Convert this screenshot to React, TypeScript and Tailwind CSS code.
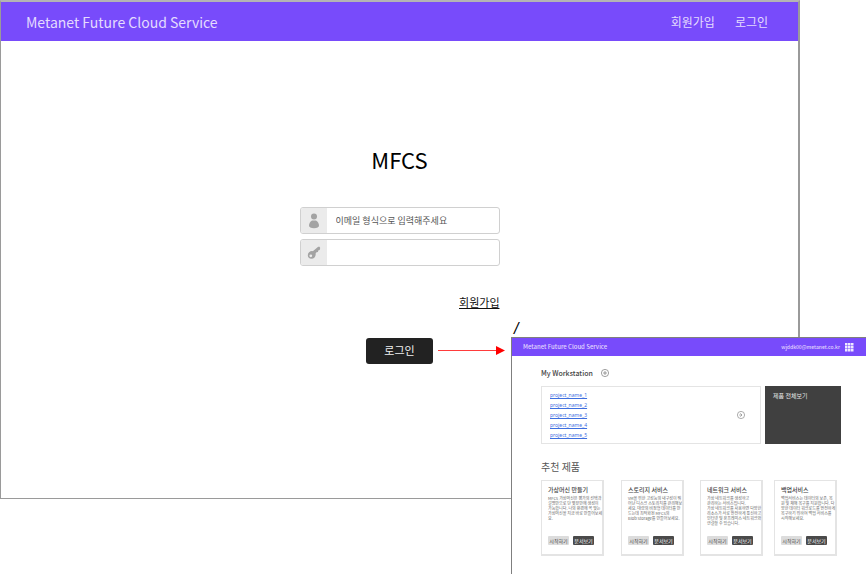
import React from "react";

const projects = [
  "project_name_1",
  "project_name_2",
  "project_name_3",
  "project_name_4",
  "project_name_5",
];

const products = [
  {
    title: "가상머신 만들기",
    lines: [
      "MFCS 가상머신은 평가의 선택과",
      "설명만으로 단 몇분만에 생성이",
      "가능합니다. 나의 환경에 꼭 맞는",
      "가상머신을 지금 바로 만들어보세",
      "요.",
    ],
  },
  {
    title: "스토리지 서비스",
    lines: [
      "VM을 위한 고성능의 내구성이 뛰",
      "어난 디스크 스토리지를 관리해보",
      "세요. 대량의 비정형 데이터를 만",
      "드는데 최적화된 MFCS의",
      "Blob Storage를 만들어보세요.",
    ],
  },
  {
    title: "네트워크 서비스",
    lines: [
      "가상 네트워크를 생성하고",
      "관리하는 서비스입니다.",
      "가상 네트워크를 사용하면 다양한",
      "리소스가 서로 안전하게 통신하고",
      "인터넷 및 온프레미스 네트워크와",
      "연결할 수 있습니다.",
    ],
  },
  {
    title: "백업서비스",
    lines: [
      "백업서비스는 데이터의 보존, 복",
      "원 및 재해 복구를 지원합니다. 다",
      "양한 데이터 워크로드를 안전하게",
      "복구하기 위하여 백업 서비스를",
      "시작해보세요.",
    ],
  },
];

function UserIcon() {
  return (
    <svg viewBox="0 0 12 16" className="h-4 w-3" fill="#a3a3a3" aria-hidden="true">
      <circle cx="6" cy="3.5" r="3" />
      <path d="M4 7.4h4c2 1 3 3.2 3 5.2 0 1.8-2 2.6-5 2.6s-5-.8-5-2.6c0-2 1-4.200 3-5.200z" />
    </svg>
  );
}

function KeyIcon() {
  return (
    <svg viewBox="0 0 14 14" className="size-3.5" aria-hidden="true">
      <path
        fill="#a3a3a3"
        fillRule="evenodd"
        d="M12.600 .8l.6 1.200-.5 2-1.500.5-.2 1.400-1.500.4-.9 1.300c.5 2.300-1.200 5.200-4.200 5.200C2.200 12.800.8 11.200.8 9.200c0-2.600 2.600-4.500 5-4l5.400-4.400zM3.800 8.400a1.400 1.400 0 1 0 0 2.800 1.400 1.400 0 0 0 0-2.800z"
      />
    </svg>
  );
}

function LoginWindow() {
  return (
    <section className="mr-[66px] h-[499px] border border-t-2 border-r-2 border-[#9a9a9a] border-t-[#b4b4b4] bg-white">
      <header className="flex h-[39px] items-center justify-between bg-[#784bfb] pl-[25px] pr-[30px]">
        <span className="text-[14px] leading-5 text-[#e4dbfe]">Metanet Future Cloud Service</span>
        <nav className="flex gap-5 text-[12px] leading-5 text-[#e4dbfe]">
          <a href="#signup">회원가입</a>
          <a href="#login">로그인</a>
        </nav>
      </header>
      <form className="mx-auto flex w-[200px] flex-col pt-[102px]" onSubmit={(e) => e.preventDefault()}>
        <h1 className="text-center text-[22px] leading-8 text-black">MFCS</h1>
        <div className="mt-8 flex flex-col gap-[5px]">
          <label className="flex h-[27px] overflow-hidden rounded-[3px] border border-[#d0d0d0]">
            <span className="flex w-[26px] shrink-0 items-center justify-center bg-[#ebebeb]">
              <UserIcon />
            </span>
            <input
              type="email"
              aria-label="이메일"
              placeholder="이메일 형식으로 입력해주세요"
              className="min-w-0 flex-1 px-[9px] text-[9px] text-[#555] outline-none placeholder:text-[#555]"
            />
          </label>
          <label className="flex h-[27px] overflow-hidden rounded-[3px] border border-[#d0d0d0]">
            <span className="flex w-[26px] shrink-0 items-center justify-center bg-[#ebebeb]">
              <KeyIcon />
            </span>
            <input
              type="password"
              aria-label="비밀번호"
              className="min-w-0 flex-1 px-[9px] text-[9px] outline-none"
            />
          </label>
        </div>
        <a href="#signup" className="mt-7 self-end text-[11px] leading-4 text-[#111] underline">
          회원가입
        </a>
        <button type="submit" className="mt-7 h-[26px] w-[67px] self-center rounded-[3px] bg-[#222] pb-0.5 text-[11px] text-[#f0f0f0]">
          로그인
        </button>
      </form>
    </section>
  );
}

function ProductCard({ title, lines }: { title: string; lines: string[] }) {
  return (
    <article className="flex h-[76px] w-[63px] flex-col border border-r-2 border-b-2 border-[#e4e4e4] bg-white pl-1.5 pt-[5px]">
      <h3 className="text-[6px] leading-[8px] font-medium whitespace-nowrap text-[#444]">{title}</h3>
      <p className="mt-0.5 h-10 text-[4px] leading-[5px] whitespace-nowrap text-[#666]">
        {lines.map((line) => (
          <span key={line} className="block">
            {line}
          </span>
        ))}
      </p>
      <div className="flex gap-1 text-[5px] leading-[9px]">
        <button type="button" className="h-[9px] w-[21px] rounded-[1px] bg-[#dcdcdc] whitespace-nowrap text-[#444]">
          시작하기
        </button>
        <button type="button" className="h-[9px] w-[21px] rounded-[1px] bg-[#4a4a4a] whitespace-nowrap text-white">
          문서보기
        </button>
      </div>
    </article>
  );
}

function WorkstationWindow() {
  return (
    <section className="absolute top-[337px] right-0 bottom-0 left-[511px] overflow-hidden border-t border-l border-[#7f7f7f] bg-white">
      <header className="flex h-[18px] items-center justify-between bg-[#784bfb] pl-[11px] pr-3">
        <span className="text-[6px] leading-[10px] font-medium text-[#e0d6fe]">Metanet Future Cloud Service</span>
        <div className="flex items-center gap-[5px]">
          <span className="text-[5px] leading-[10px] font-medium text-[#e0d6fe]">wjddk00@metanet.co.kr</span>
          <svg viewBox="0 0 9 9" className="size-[9px]" fill="#eee9ff" aria-hidden="true">
            {[0, 3, 6].map((y) => [0, 3, 6].map((x) => <rect key={`${x}${y}`} x={x} y={y} width="2.500" height="2.500" />))}
          </svg>
        </div>
      </header>
      <div className="pt-3 pl-[29px] pr-[25px]">
        <div className="flex items-center gap-2">
          <h2 className="text-[7px] leading-[10px] font-medium text-[#444]">My Workstation</h2>
          <button type="button" aria-label="추가">
            <svg viewBox="0 0 8 8" className="size-2" fill="none" stroke="#777" strokeWidth=".7" aria-hidden="true">
              <circle cx="4" cy="4" r="3.600" />
              <path d="M4 2v4M2 4h4" />
            </svg>
          </button>
        </div>
        <div className="mt-2 flex h-[58px] gap-1">
          <div className="flex flex-1 items-center justify-between border border-[#e4e4e4] pl-2 pr-[15px]">
            <ul className="text-[5px] leading-[10px] text-[#3f6fdf]">
              {projects.map((name) => (
                <li key={name}>
                  <a href={`#${name}`} className="block font-['Noto_Sans'] underline">
                    {name}
                  </a>
                </li>
              ))}
            </ul>
            <button type="button" aria-label="다음">
              <svg viewBox="0 0 8 8" className="size-2" fill="none" stroke="#8a8a8a" strokeWidth=".7" aria-hidden="true">
                <circle cx="4" cy="4" r="3.600" />
                <path d="M3.300 2.300L5 4 3.300 5.700M2.200 4H5" />
              </svg>
            </button>
          </div>
          <a href="#products" className="block w-[76px] bg-[#404040] px-2 pt-1.5 text-[6px] leading-[8px] text-[#e6e6e6]">
            제품 전체보기
          </a>
        </div>
        <h2 className="mt-4 text-[10px] leading-[14px] text-[#555]">추천 제품</h2>
        <div className="mt-1.5 grid grid-cols-[80px_79px_74px_63px]">
          {products.map((product) => (
            <ProductCard key={product.title} {...product} />
          ))}
        </div>
      </div>
    </section>
  );
}

export default function App() {
  return (
    <main className="relative min-h-screen overflow-hidden bg-white font-['Noto_Sans_CJK_KR',sans-serif]">
      <LoginWindow />
      <svg viewBox="0 0 68 10" className="absolute top-[346px] left-[438px] h-2.5 w-[68px]" aria-hidden="true">
        <path d="M0 4.500h60" stroke="#ff3b3b" strokeWidth="1" />
        <path d="M58 0l9 4.500L58 9z" fill="#f00" />
      </svg>
      <span className="absolute top-[319px] left-[514px] font-['Liberation_Sans'] text-[16px] leading-5 text-black italic">/</span>
      <WorkstationWindow />
    </main>
  );
}
